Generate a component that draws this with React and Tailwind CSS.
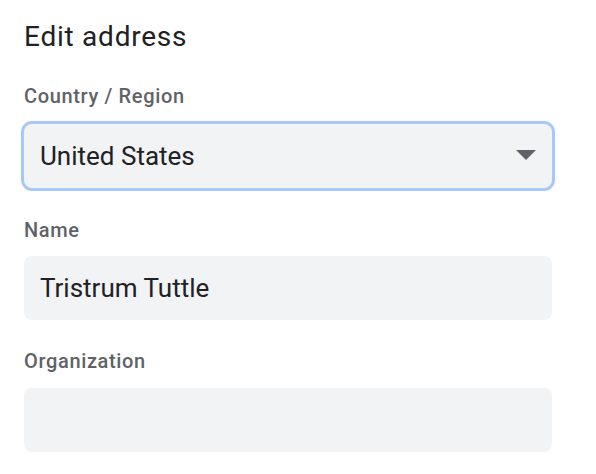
import React from "react";

function Label({ children, className = "" }) {
  return (
    <div className={`text-[20px] leading-[24px] font-medium text-[#5f6368] tracking-[0.65px] ${className}`}>
      {children}
    </div>
  );
}

export default function App() {
  return (
    <div
      className="w-[596px] h-[474px] bg-white overflow-hidden pl-[24px] pt-[21px]"
      style={{ fontFamily: "Roboto, 'Liberation Sans', sans-serif" }}
    >
      <h1 className="text-[28px] leading-[32px] font-normal text-[#202124] tracking-[0.75px]">Edit address</h1>

      <Label className="mt-[31px]">Country / Region</Label>
      <div className="mt-[16px] w-[528px] h-[64px] rounded-[8px] bg-[#f1f3f4] shadow-[0_0_0_3px_#a8c7fa] flex items-center justify-between pl-[16px] pr-[16px]">
        <span className="text-[26px] text-[#202124]">United States</span>
        <svg width="20" height="10" viewBox="0 0 20 10" className="mt-[-2px]">
          <path d="M0 0 L20 0 L10 10 Z" fill="#5f6368" />
        </svg>
      </div>

      <Label className="mt-[30px]">Name</Label>
      <div className="mt-[14px] w-[528px] h-[64px] rounded-[8px] bg-[#f1f3f4] flex items-center pl-[16px]">
        <span className="text-[26px] text-[#202124]">Tristrum Tuttle</span>
      </div>

      <Label className="mt-[29px]">Organization</Label>
      <div className="mt-[15px] w-[528px] h-[64px] rounded-[8px] bg-[#f1f3f4]" />
    </div>
  );
}
